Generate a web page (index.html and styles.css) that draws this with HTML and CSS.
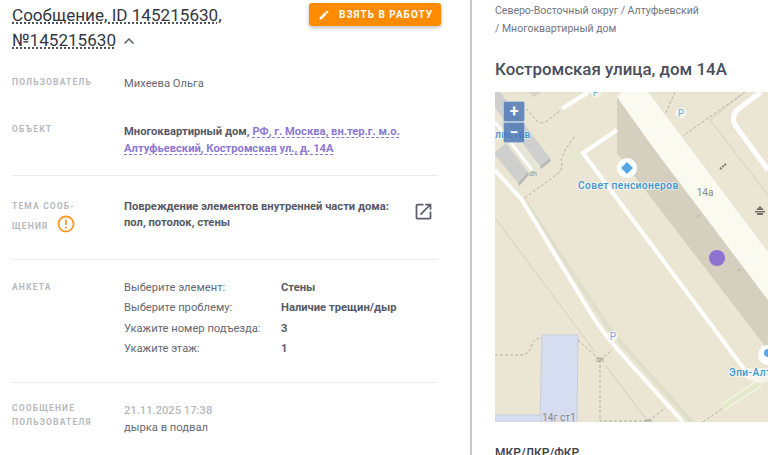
FILE: index.html
```html
<!DOCTYPE html>
<html lang="ru">
<head>
  <meta charset="UTF-8" />
  <meta name="viewport" content="width=device-width, initial-scale=1.0" />
  <title>Сообщение 145215630</title>
  <link rel="stylesheet" href="styles.css">
</head>
<body>
  <div class="layout">

    <!-- Message details -->
    <section class="details">
      <header class="details-head">
        <h1 class="details-title">
          <span class="dotted">Сообщение, ID 145215630, №145215630</span>
          <svg class="chevron" width="12" height="8" viewBox="0 0 12 8"><path d="M1.500 6.500 6 2l4.500 4.500" fill="none" stroke="#5b5f6b" stroke-width="1.500"/></svg>
        </h1>
        <button type="button" class="take-btn">
          <svg width="12" height="12" viewBox="0 0 24 24"><path fill="#fff" d="M3 17.250V21h3.750L17.810 9.940l-3.750-3.750L3 17.250zM20.710 7.040a1 1 0 0 0 0-1.410l-2.340-2.340a1 1 0 0 0-1.410 0l-1.830 1.830 3.750 3.750 1.830-1.830z"/></svg>
          Взять в работу
        </button>
      </header>

      <div class="row row-user">
        <div class="label">Пользователь</div>
        <div class="value">Михеева Ольга</div>
      </div>

      <div class="row row-object">
        <div class="label">Объект</div>
        <div class="value strong">Многоквартирный дом, <a class="addr" href="#">РФ, г. Москва, вн.тер.г. м.о. Алтуфьевский, Костромская ул., д. 14А</a></div>
      </div>

      <div class="row row-topic">
        <div class="label label-topic">Тема сооб-<br>щения
          <svg class="warn" width="18" height="18" viewBox="0 0 18 18"><circle cx="9" cy="9" r="7.500" fill="none" stroke="#ff9a2e" stroke-width="1.800"/><path d="M9 4.800v5.200M9 11.800v1.600" stroke="#ff9a2e" stroke-width="1.800"/></svg>
        </div>
        <div class="value strong topic-text">Повреждение элементов внутренней части дома: пол, потолок, стены</div>
        <svg class="open-icon" width="21" height="21" viewBox="0 0 24 24"><path fill="#5b5f6b" d="M19 19H5V5h7V3H5a2 2 0 0 0-2 2v14a2 2 0 0 0 2 2h14a2 2 0 0 0 2-2v-7h-2v7zM14 3v2h3.590l-9.830 9.830 1.410 1.410L19 6.410V10h2V3h-7z"/></svg>
      </div>

      <div class="row row-form">
        <div class="label">Анкета</div>
        <dl class="answers">
          <dt>Выберите элемент:</dt><dd>Стены</dd>
          <dt>Выберите проблему:</dt><dd>Наличие трещин/дыр</dd>
          <dt>Укажите номер подъезда:</dt><dd>3</dd>
          <dt>Укажите этаж:</dt><dd>1</dd>
        </dl>
      </div>

      <div class="row row-message">
        <div class="label label-message">Сообщение<br>пользователя</div>
        <div class="value message-text">
          <div class="date">21.11.2025 17:38</div>
          дырка в подвал
        </div>
      </div>
    </section>

    <!-- Object and map -->
    <section class="object">
      <nav class="crumbs">Северо-Восточный округ / Алтуфьевский<br>/ Многоквартирный дом</nav>
      <h2 class="object-title">Костромская улица, дом 14А</h2>

      <div class="map">
        <svg class="map-canvas" width="273" height="330" viewBox="495 92 273 330">
          <rect x="495" y="92" width="273" height="330" fill="#ebe6d4"/>

          <!-- thin borders -->
          <g fill="none" stroke="#d3cebc" stroke-width="1">
            <path d="M745 92 710 120 768 195"/>
            <path d="M495 218 595 352"/>
            <path d="M605 365 647 420"/>
          </g>

          <!-- roof corner, houses -->
          <path d="M528 92h14l-8 5z" fill="#d6d1c0"/>
          <path d="M617 97 655 150 768 300V350L622 160 617 153z" fill="#d4cfbf"/>
          <path d="M617 97 622 92H648L768 252V300L655 150z" fill="#fbfaf0"/>
          <path d="M495 92H500L550 158 540 166 495 108z" fill="#cfcfcd"/>
          <path d="M495 152 506 143 528 172 518 183 495 155z" fill="#cfcfcd"/>
          <path d="M540 166 550 158 551 161 541 169zM518 183 528 172 529 175 519 186z" fill="#b8b8b6"/>
          <path d="M542 335H578L577 422H540z" fill="#d7ddf0" stroke="#c6ccdc"/>
          <path d="M495 415H541V422H495z" fill="#d7ddf0" stroke="#c6ccdc"/>

          <!-- footpath next to the road -->
          <path d="M523 198 610 330 692 422" fill="none" stroke="#dedecb" stroke-width="4"/>
          <path d="M570 160 583 152" stroke="#e4e9cd" stroke-width="8"/>
          <path d="M723 407 760 383" stroke="#f3f4e3" stroke-width="8"/>
          <path d="M723 407 760 383" stroke="#e4e9cd" stroke-width="5"/>
          <path d="M500 122 537 170" stroke="#e6e6d8" stroke-width="6"/>

          <!-- dashed paths -->
          <g fill="none" stroke="#b3af9f" stroke-width="1" stroke-dasharray="3 2">
            <path d="M523 105 537 121Q541 125 547 121L570 103 587 92"/>
            <path d="M525 198 560 172Q563 168 561 160L565 150 575 136"/>
            <path d="M675 92 665 115"/>
            <path d="M745 92 683 136"/>
            <path d="M495 355H522Q530 354 532 344 534 338 542 338"/>
            <path d="M578 340 600 360 612 350"/>
            <path d="M600 360V421H648L665 408"/>
            <path d="M703 422 723 408"/>
          </g>

          <!-- roads -->
          <g fill="none" stroke="#fff" stroke-width="4">
            <path d="M617 130 583 153 747 373"/>
            <path d="M563 108 587 93" stroke-linecap="round"/>
            <path d="M495 170 522 200 593 317Q606 337 627 360L683 422"/>
            <path d="M495 122 532 170" stroke-width="3"/>
            <path d="M768 170 735 125Q731 117 737 110L761 92" stroke-width="5"/>
          </g>

          <!-- small icons -->
          <g fill="#77736a">
            <path d="M720 169 726 164" stroke="#77736a" stroke-width="2" stroke-dasharray="2 1"/>
            <path d="M760 206 764 210H756zM755 211H765V212.500H755zM757 213H763V215H757z"/>
            <text class="map-tiny" x="533" y="176" text-anchor="middle">dh</text>
            <text class="map-tiny" x="600" y="362" text-anchor="middle">dh</text>
            <text class="map-tiny" x="648" y="424" text-anchor="middle">dh</text>
          </g>
          <circle cx="698" cy="216" r="1.500" fill="#c0bbab"/>
          <circle cx="739" cy="270" r="1.500" fill="#c0bbab"/>

          <!-- parking -->
          <g>
            <circle cx="596" cy="92" r="5.500" fill="#f5f5ec"/>
            <circle cx="681" cy="113" r="5.500" fill="#f5f5ec"/>
            <circle cx="613" cy="336" r="5" fill="#f5f5ec"/>
            <text class="map-park" x="596" y="96" text-anchor="middle">P</text>
            <text class="map-park" x="681" y="116.500" text-anchor="middle">P</text>
            <text class="map-park" x="613" y="339.500" text-anchor="middle">P</text>
          </g>

          <!-- labels -->
          <text class="map-house" x="705" y="196" text-anchor="middle">14а</text>
          <text class="map-house" x="559" y="421" text-anchor="middle">14г ст1</text>

          <circle cx="627" cy="168" r="10" fill="#fff"/>
          <path d="M627 162 633 168 627 174 621 168z" fill="#5aa9e6"/>
          <text class="map-poi" x="578" y="189">Совет пенсионеров</text>
          <text class="map-poi" x="495" y="138">листов</text>

          <circle cx="768" cy="355" r="10" fill="#fff"/>
          <circle cx="768" cy="353" r="4" fill="#5aa9e6"/>
          <path d="M745 378Q760 386 768 381V368H745z" fill="#fff" opacity=".5"/>
          <text class="map-poi" x="729" y="376">Эпи-Алтуфьево</text>

          <circle cx="717" cy="258" r="8" fill="#8c73cf"/>
        </svg>
        <div class="zoom">
          <button type="button" class="zoom-btn">+</button>
          <button type="button" class="zoom-btn">−</button>
        </div>
      </div>

      <h3 class="section-title">МКР/ЛКР/ФКР</h3>
    </section>

  </div>
</body>
</html>
```

FILE: styles.css
```css
html, body {
  margin: 0;
  padding: 0;
  height: 100%;
  overflow: hidden;
  background: #fff;
  font-family: Roboto, "Noto Sans", sans-serif;
  color: #5b5f6b;
}
.layout {
  display: flex;
  height: 455px;
  overflow: hidden;
}

/* left column */
.details {
  box-sizing: border-box;
  width: 470px;
  flex: none;
  padding: 0 32px 0 12px;
}
.details-head {
  display: flex;
  align-items: flex-start;
  justify-content: space-between;
  height: 62px;
  padding-top: 3px;
  margin-right: -3px;
  box-sizing: border-box;
}
.details-title {
  margin: 0;
  width: 240px;
  font-size: 17.100px;
  font-weight: 400;
  line-height: 25px;
  color: #33363f;
}
.dotted {
  text-decoration: underline dotted #33363f;
  text-underline-offset: 2px;
}
.chevron {
  margin-left: 3px;
  vertical-align: 1px;
}
.take-btn {
  display: flex;
  align-items: center;
  gap: 9px;
  height: 23px;
  width: 132px;
  padding: 0 0 0 9px;
  border: none;
  border-radius: 3px;
  background: #ff8c00;
  color: #fff;
  font-family: inherit;
  font-size: 10px;
  font-weight: 700;
  letter-spacing: 1px;
  text-transform: uppercase;
  white-space: nowrap;
  box-shadow: 0 2px 4px rgba(0,0,0,0.25);
}

.row {
  display: grid;
  grid-template-columns: 112px 1fr;
  border-bottom: 1px solid #ececee;
  font-size: 11.200px;
  line-height: 17px;
}
.label {
  font-size: 8.500px;
  font-weight: 700;
  letter-spacing: 1.150px;
  text-transform: uppercase;
  color: #b6b9c0;
  line-height: 14px;
}
.value {
  color: #666974;
}
.strong {
  font-weight: 700;
  color: #565a66;
}
.addr {
  color: #8c78d2;
  text-decoration: underline dashed #8c78d2;
  text-underline-offset: 2px;
}
.row-user {
  height: 47px;
  padding-top: 13px;
  border-bottom: none;
  box-sizing: border-box;
}
.row-object {
  height: 67px;
  box-sizing: border-box;
  padding-top: 13px;
}
.row-object .value {
  margin-top: 1px;
  padding-right: 30px;
}
.row-topic {
  position: relative;
  height: 84px;
  box-sizing: border-box;
  padding-top: 20px;
}
.label-topic {
  line-height: 20px;
}
.warn {
  vertical-align: -4px;
  margin-left: 6px;
  margin-top: -2px;
}
.topic-text {
  line-height: 16px;
  padding-right: 40px;
  margin-top: 3px;
}
.open-icon {
  position: absolute;
  right: 4px;
  top: 25px;
}
.row-form {
  height: 123px;
  box-sizing: border-box;
  padding-top: 20px;
}
.answers {
  display: grid;
  grid-template-columns: 157px 1fr;
  margin: 0;
  line-height: 20px;
  grid-auto-rows: 20.300px;
  margin-top: -2px;
}
.answers dt {
  color: #666974;
}
.answers dd {
  margin: 0;
  font-weight: 700;
  color: #565a66;
}
.row-message {
  border-bottom: none;
  padding-top: 18px;
}
.message-text {
  margin-top: 1px;
}
.date {
  font-weight: 500;
  color: #b6b9c0;
}

/* right column */
.object {
  flex: 1;
  min-width: 0;
  border-left: 2px solid #c9c9cd;
  padding-left: 23px;
}
.crumbs {
  margin-top: 2px;
  font-size: 10.500px;
  line-height: 17.500px;
  color: #72757f;
}
.object-title {
  margin: 22px 0 13px;
  font-size: 16.900px;
  font-weight: 500;
  line-height: 20px;
  color: #4a4e5c;
}
.map {
  position: relative;
  height: 330px;
  overflow: hidden;
}
.map-canvas {
  display: block;
}
.zoom {
  position: absolute;
  left: 8px;
  top: 9px;
  display: flex;
  flex-direction: column;
}
.zoom-btn {
  width: 22px;
  height: 21px;
  padding: 0;
  border: 1px solid rgba(255,255,255,0.5);
  border-radius: 2px;
  background: rgba(70,115,180,0.8);
  color: #fff;
  font-family: inherit;
  font-size: 16px;
  font-weight: 700;
  line-height: 18px;
}
.section-title {
  margin: 23px 0 0;
  font-size: 12px;
  font-weight: 500;
  line-height: 16px;
  color: #3c3f4a;
}

/* map labels */
.map-poi {
  font-size: 10.200px;
  font-weight: 500;
  letter-spacing: 0.4px;
  fill: #3a97d4;
  paint-order: stroke;
  stroke: rgba(255,255,255,0.5);
  stroke-width: 2px;
}
.map-house {
  font-size: 10px;
  fill: #8a8a80;
}
.map-park {
  font-size: 10px;
  fill: #6fb3e6;
}
.map-tiny {
  font-size: 7px;
  fill: #9a968a;
}
```
